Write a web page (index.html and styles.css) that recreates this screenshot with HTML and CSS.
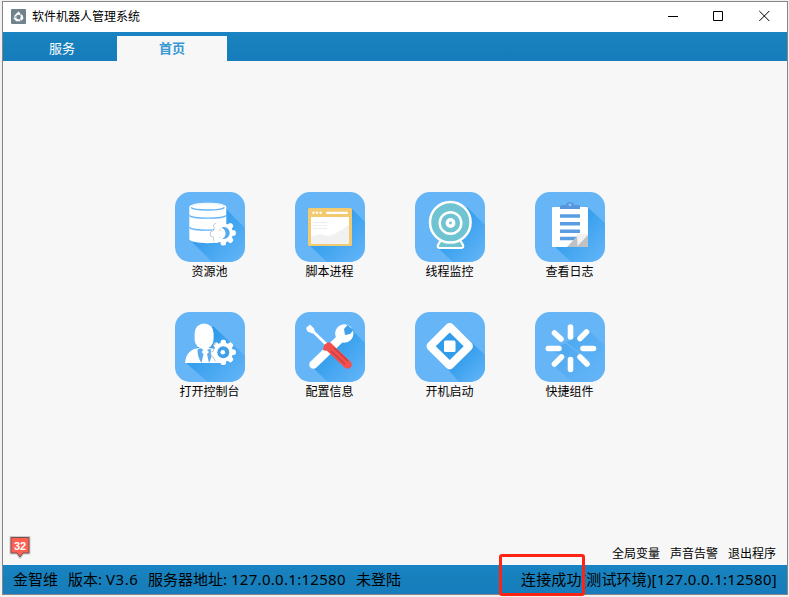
FILE: index.html
```html
<!DOCTYPE html>
<html lang="zh-CN">
<head>
<meta charset="utf-8">
<title>软件机器人管理系统</title>
<link rel="stylesheet" href="styles.css">
</head>
<body>
<svg class="defs" width="0" height="0" aria-hidden="true">
  <defs>
    <linearGradient id="shade" x1="0" y1="0" x2="1" y2="1"><stop offset=".25" stop-color="#2c9aea"/><stop offset="1" stop-color="#66b6f8"/></linearGradient>
    <linearGradient id="soft" x1="0" y1="0" x2="1" y2="1"><stop offset=".15" stop-color="#4ba7ee"/><stop offset="1" stop-color="#66b6f8"/></linearGradient>
    <clipPath id="tile"><rect width="70" height="70" rx="15"/></clipPath>
    <g id="gear">
      <g fill="#fff"><rect x="-2.7" y="-12.6" width="5.4" height="25.2" rx="2"/><rect x="-2.7" y="-12.6" width="5.4" height="25.2" rx="2" transform="rotate(45)"/><rect x="-2.7" y="-12.6" width="5.4" height="25.2" rx="2" transform="rotate(90)"/><rect x="-2.7" y="-12.6" width="5.4" height="25.2" rx="2" transform="rotate(135)"/></g>
      <circle r="9.7" fill="#fff"/>
    </g>
  </defs>
</svg>
<div class="window">
  <header class="titlebar">
    <svg class="logo" width="15" height="15" viewBox="0 0 15 15"><rect width="15" height="15" rx="1" fill="#70838c"/><path d="M7.5 2.400 11.800 6.700 12.400 9.800 9.500 12.200H5.200L2.500 9.600 3.500 6.400Z" fill="#fff"/><circle cx="7.500" cy="8" r="2.300" fill="#70838c"/><path d="M3 8.600 5.200 7.500M9.300 6.300 10 4.300M8.600 10l1.300 2" stroke="#70838c" stroke-width=".8"/></svg>
    <h1 class="title">软件机器人管理系统</h1>
    <svg class="controls" width="104" height="14" viewBox="0 0 104 14" fill="none" stroke="#000"><path d="M0 7.500h10M45.500 2.500h9v9h-9zM91.300 2l10 10M101.300 2l-10 10"/></svg>
  </header>
  <nav class="tabs"><span class="tab">服务</span><span class="tab active">首页</span></nav>
  <main class="content">
    <div class="grid">
      <div class="item"><svg class="tile" viewBox="0 0 70 70"><g clip-path="url(#tile)"><rect width="70" height="70" fill="#65b5f7"/><path d="M50 16 70 36V70H37L15 48Z" fill="url(#shade)"/></g>
        <path d="M14.300 15c0-5.800 37-5.800 37 0v32c0 5.500-37 5.500-37 0Z" fill="#fff"/><path d="M16 15.500c3 3.300 30 3.300 33.500 0M14.300 23.500c3 3.500 34 3.500 37 0M14.300 35.500c3 3.500 34 3.500 37 0" fill="none" stroke="#65b5f7" stroke-width="1.300"/><path d="M17 14c3-3 28-3 32 0" fill="none" stroke="#d6ebfc" stroke-width=".6"/>
        <g transform="translate(48.300 41)"><use href="#gear"/><path d="M-9 8c-2-1 0-3-1-4l-3-1v-4l3-1 1-3-1-3 3-2M-3-4l-1 2M-4 4l1 1" fill="none" stroke="#a9b9c5" stroke-width=".7"/><path d="M-2-5.500a6 6 0 1 1 1 11.300C3 4 4-3-2-5.500Z" fill="#58aaed"/></g></svg><span class="label">资源池</span></div>
      <div class="item"><svg class="tile" viewBox="0 0 70 70"><g clip-path="url(#tile)"><rect width="70" height="70" fill="#65b5f7"/><path d="M57 17 70 30V70H32L14 53Z" fill="url(#shade)"/></g>
        <rect x="13" y="16" width="44" height="38" rx="1.500" fill="#f4ca70"/><path d="M16 25h38v27H16z" fill="#fff"/><path d="M16 45c4-1 8-4 13-2l4 1c9-2 14-7 21-11v19H16Z" fill="#f1f1f1"/><path d="M18 30.500h14M18 33.500h14M18 36.500h14" stroke="#ededed"/><g fill="#fff"><circle cx="18.500" cy="20.700" r="1.200"/><circle cx="22" cy="20.700" r="1.200"/><circle cx="25.600" cy="20.700" r="1.200"/><rect x="31" y="19.700" width="22" height="2.200" rx="1"/></g></svg><span class="label">脚本进程</span></div>
      <div class="item"><svg class="tile" viewBox="0 0 70 70"><g clip-path="url(#tile)"><rect width="70" height="70" fill="#65b5f7"/><path d="M52 15 70 33V70H38L23 56Z" fill="url(#shade)"/></g>
        <path d="M26 48h19l3 5q1 3-2 3H25q-3 0-2-3Z" fill="#70c3d0" stroke="#fff" stroke-width="2.200"/><circle cx="35.300" cy="30.300" r="20.300" fill="#70c3d0" stroke="#fff" stroke-width="2.500"/><circle cx="35.500" cy="31" r="10.800" fill="#70c3d0" stroke="#fff" stroke-width="2.400"/><circle cx="35.500" cy="31" r="4.900" fill="#fff"/><circle cx="35.500" cy="31" r="1.400" fill="#70c3d0"/></svg><span class="label">线程监控</span></div>
      <div class="item"><svg class="tile" viewBox="0 0 70 70"><g clip-path="url(#tile)"><rect width="70" height="70" fill="#65b5f7"/><path d="M51 14 70 31V70H36L18 53Z" fill="url(#shade)"/></g>
        <path d="M18 15h34q1 0 1 1v38q0 1-1 1H18q-1 0-1-1V16q0-1 1-1Z" fill="#fff"/><path d="M25 17v-2q0-2 2-2h4c0-4 8-4 8 0h4q2 0 2 2v2Z" fill="#5596dd"/><circle cx="35" cy="12.800" r="1.500" fill="#8fc3f2"/><path d="M25 24h20M25 31.700h20M25 39.300h20M25 46.500h17" stroke="#5b9de2" stroke-width="3.400"/><path d="M32 55 44 42 53 43V54q0 1-1 1Z" fill="#bfc2c5"/><path d="M42 42h11v1L42.500 54Z" fill="#f2f2f2"/></svg><span class="label">查看日志</span></div>
      <div class="item"><svg class="tile" viewBox="0 0 70 70"><g clip-path="url(#tile)"><rect width="70" height="70" fill="#65b5f7"/><path d="M38 14 70 44V70H33L11 51Z" fill="url(#shade)"/></g>
        <path d="M10 51C11 41 16 37 24 36h10c7 0 12 4 14 15Z" fill="#fff"/><path d="M22.500 37.500c0 5 1 9 4 13.500l2-9-2-2 2-2-3-2ZM37 38c0 5-1 9-3 13l-2-9 2-2-2-2 3-1Z" fill="#5aabed"/><rect x="19.600" y="11.500" width="19" height="25.500" rx="9.500" fill="#fff"/><g transform="translate(48.300 40.300)"><use href="#gear"/><path d="M-8 9l-2-4-3-1v-4l3-1 1-4-1-2 3-2" fill="none" stroke="#9aabb9" stroke-width=".7"/><circle r="6" fill="#419fe7"/><circle cx="-.5" r="2.300" fill="#fff"/></g></svg><span class="label">打开控制台</span></div>
      <div class="item"><svg class="tile" viewBox="0 0 70 70"><g clip-path="url(#tile)"><rect width="70" height="70" fill="#65b5f7"/><path d="M56 17 70 31V70H33L17 55Z" fill="url(#shade)"/></g>
        <path d="M18.500 52.500 45 27" stroke="#fff" stroke-width="8.500" stroke-linecap="round"/><circle cx="49.300" cy="21.500" r="9.200" fill="#fff"/><path d="m49 17 3.500-4 6 5-3.500 4-5 1Z" fill="#3ca0eb"/><path d="M14 15.500 32 33" stroke="#fff" stroke-width="2.800"/><path d="m11 16 4-3.500 4 4 1 4-2.500 1-5-2Z" fill="#fff"/><path d="m34 35 18.500 17.500" stroke="#f34f4c" stroke-width="8.500" stroke-linecap="round"/><path d="m28 38 1-5 5-3 3 2-6 7Z" fill="#f34f4c"/><path d="m36 39 14 13M39 36l14 13" stroke="#c33f48" stroke-width="1.200"/></svg><span class="label">配置信息</span></div>
      <div class="item"><svg class="tile" viewBox="0 0 70 70"><g clip-path="url(#tile)"><rect width="70" height="70" fill="#65b5f7"/><path d="M57 31 70 43V70H44L32 56Z" fill="url(#shade)"/></g>
        <path d="m34.700 15.500 18.700 18.700-18.700 18.700-18.700-18.700Z" fill="#fff" stroke="#fff" stroke-width="9" stroke-linejoin="round"/><path d="m34.700 20.500 14 13.700-14 13.700-14-13.700Z" fill="#329ceb"/><rect x="29" y="28.500" width="11.500" height="11.500" rx="1.500" fill="#fff"/></svg><span class="label">开机启动</span></div>
      <div class="item"><svg class="tile" viewBox="0 0 70 70"><g clip-path="url(#tile)"><rect width="70" height="70" fill="#65b5f7"/><path d="M53 18 70 34V70H37L18 53 28 43 13 38 29 32Z" fill="url(#soft)"/><path d="m27 28 28 21" stroke="#68b5f5" stroke-width="1.500"/></g>
        <path d="M35.500 15v10M35.500 47.500v10M13.300 36.500H24M48 36.500h10.500M19.500 21l6.500 6M51.500 20 45 26.500M19.500 52l7-7M45 45l7 7" fill="none" stroke="#fff" stroke-width="5.600" stroke-linecap="round"/></svg><span class="label">快捷组件</span></div>
    </div>
    <div class="tools">
      <svg class="badge" width="22" height="23" viewBox="0 0 22 23"><path d="M2 1.500h18v15.500h-6l-3 4-3-4H2Z" fill="none" stroke="#ccc" stroke-width="3"/><path d="M2 1.500h18v15.500h-6l-3 4-3-4H2Z" fill="#ff5e53" stroke="#77504e"/><text x="11" y="13.500" text-anchor="middle">32</text></svg>
      <div class="links"><span>全局变量</span><span>声音告警</span><span>退出程序</span></div>
    </div>
  </main>
  <footer class="status">
    <span class="company">金智维</span><span class="version">版本: <b>V3.6</b></span><span class="server">服务器地址: <b>127.0.0.1:12580</b></span><span>未登陆</span>
    <span class="connection">连接成功(测试环境)<b>[127.0.0.1:12580]</b></span>
  </footer>
</div>
<div class="highlight"></div>
</body>
</html>
```
FILE: styles.css
```css
* { box-sizing: border-box; }
body {
  margin: 0;
  padding: 1px 1px 2px 2px;
  height: 597px;
  overflow: hidden;
  background: #f1f1f1;
  color: #000;
  font: 12px "Noto Sans CJK SC", sans-serif;
}
.defs { position: absolute; }
.window {
  display: flex;
  flex-direction: column;
  height: 594px;
  border: 1px solid #858585;
  background: #f7f7f7;
}
.titlebar {
  display: flex;
  align-items: center;
  height: 30px;
  padding: 0 15px 2px 8px;
  background: #fff;
}
.title { margin: 0 0 0 6px; font-size: 12px; font-weight: 400; line-height: 20px; }
.controls { margin-left: auto; }
.tabs {
  display: flex;
  align-items: flex-end;
  height: 29px;
  padding-left: 4px;
  background: linear-gradient(#1983c4, #1780bb 50%, #177cbd);
}
.tab {
  width: 110px;
  height: 25px;
  color: #fff;
  font-size: 13px;
  line-height: 24px;
  text-align: center;
}
.active { background: #f7f7f7; color: #3598d3; font-weight: 700; }
.content {
  display: flex;
  flex: 1;
  flex-direction: column;
  justify-content: space-between;
  padding: 131px 11px 6px 6px;
}
.grid {
  display: grid;
  grid-template-columns: repeat(4, 70px);
  grid-auto-rows: 90px;
  gap: 30px 50px;
  margin-left: 166px;
}
.item { display: flex; flex-direction: column; align-items: center; }
.tile { width: 70px; height: 70px; flex: none; }
.label { line-height: 18px; margin-right: 1px; white-space: nowrap; }
.tools { display: flex; justify-content: space-between; align-items: flex-end; }
.badge text { fill: #fff; font: bold 11px "Liberation Sans", sans-serif; }
.links { display: flex; gap: 10px; line-height: 12px; }
.status {
  display: flex;
  align-items: center;
  height: 29px;
  padding: 0 10px;
  background: linear-gradient(#1983c4, #1780bb 50%, #177cbd);
  font: 15px "Noto Sans", "Noto Sans CJK SC", sans-serif;
  line-height: 29px;
  white-space: nowrap;
}
.status b { font-weight: 400; letter-spacing: .3px; }
.status .version b { letter-spacing: .6px; }
.company { width: 55px; }
.version { width: 80px; }
.server { width: 208px; }
.connection { margin-left: auto; letter-spacing: .15px; }
.highlight {
  position: absolute;
  left: 499px;
  top: 554px;
  width: 86px;
  height: 42px;
  border: 3px solid #ff2314;
  border-radius: 3px;
}
```
